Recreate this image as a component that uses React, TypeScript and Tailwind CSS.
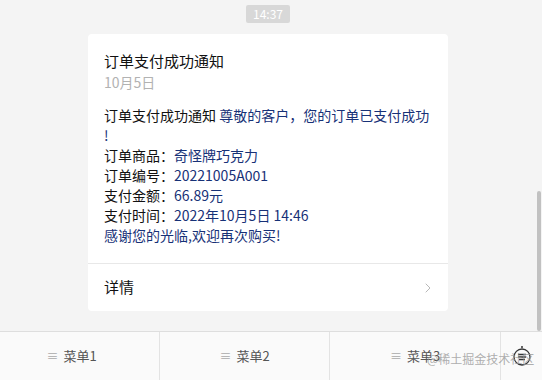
import { ChevronRight } from 'lucide-react';

const cjk = { fontFamily: '"Microsoft YaHei", "Noto Sans CJK SC", "Noto Sans", sans-serif' };

const rows = [
  { label: '订单商品：', value: '奇怪牌巧克力' },
  { label: '订单编号：', value: '20221005A001' },
  { label: '支付金额：', value: '66.89元' },
  { label: '支付时间：', value: '2022年10月5日 14:46' },
];

function MenuCell({ label, className }: { label: string; className: string }) {
  return (
    <div className={`flex items-center justify-center border-r border-[#e3e3e3] text-[13px] text-[#555] ${className}`}>
      <span className="mr-[5px] text-[12px] text-[#aaa]">≡</span>
      <span>{label}</span>
    </div>
  );
}

export default function App() {
  return (
    <div className="relative flex h-[380px] w-[542px] flex-col overflow-hidden bg-[#f4f4f4]" style={cjk}>
      {/* message area */}
      <div className="flex flex-1 flex-col items-center pr-[6px] pt-[5px]">
        <div className="flex h-[18px] items-center rounded-[2px] bg-[#d8d8d8] px-[7px] text-[12px] text-white">
          14:37
        </div>

        <div className="mt-[11px] w-[360px] rounded-[4px] bg-white">
          <div className="px-4 pb-[18px] pt-4">
            <div className="text-[15px] leading-[22px] text-[#111]">订单支付成功通知</div>
            <div className="text-[14px] leading-[20px] text-[#b2b2b2]">10月5日</div>

            <div className="mt-[13px] text-[14px] leading-[20px] text-[#111]">
              <div className="whitespace-nowrap">
                订单支付成功通知 <span className="text-[#173177]">尊敬的客户，您的订单已支付成功</span>
              </div>
              <div className="text-[#173177]">!</div>
              {rows.map((r) => (
                <div key={r.label}>
                  {r.label}
                  <span className="text-[#173177]">{r.value}</span>
                </div>
              ))}
              <div className="text-[#173177]">感谢您的光临,欢迎再次购买!</div>
            </div>
          </div>

          <div className="flex h-[48px] items-center justify-between border-t border-[#e8e8e8] pl-4 pr-[12px]">
            <span className="text-[15px] text-[#111]">详情</span>
            <ChevronRight className="h-[16px] w-[16px] text-[#b8b8b8]" strokeWidth={1.5} />
          </div>
        </div>
      </div>

      {/* menu bar */}
      <div className="flex h-[49px] border-t border-[#dedede] bg-[#fafafa]">
        <MenuCell label="菜单1" className="w-[160px] pr-[16px]" />
        <MenuCell label="菜单2" className="w-[170px]" />
        <MenuCell label="菜单3" className="w-[171px]" />
        <div className="flex flex-1 items-center justify-center">
          <svg width="20" height="22" viewBox="0 0 20 22" fill="none" stroke="#333" strokeWidth="1.3">
            <circle cx="10" cy="12" r="8" />
            <circle cx="10" cy="2" r="1" fill="#333" stroke="none" />
            <path d="M6 9.5h8M6 12h8M7 14.5h6" />
          </svg>
        </div>
      </div>

      {/* scrollbar thumb */}
      <div className="absolute right-[1px] top-[191px] h-[140px] w-[4px] rounded-[2px] bg-[#c1c1c1]" />

      {/* watermark */}
      <div className="pointer-events-none absolute left-[427px] top-[350px] whitespace-nowrap text-[12px] text-[#999]/80">
        @稀土掘金技术社区
      </div>
    </div>
  );
}
